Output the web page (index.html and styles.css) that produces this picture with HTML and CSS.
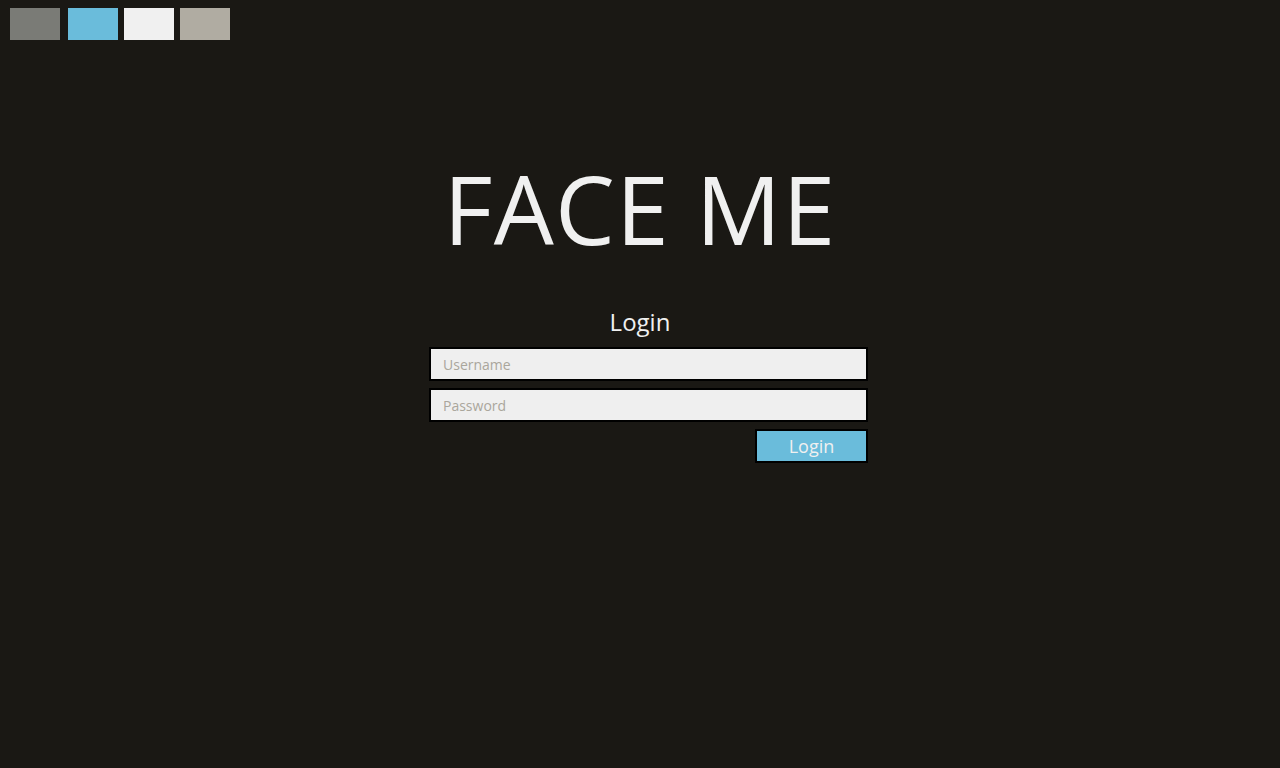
FILE: index.html
```html
<!DOCTYPE html>
<html>
<head>
<meta charset="utf-8">
<link rel="stylesheet" href="styles.css">
</head>
<body>
<div class="swatches">
  <span class="sw sw-gray"></span>
  <span class="sw sw-blue"></span>
  <span class="sw sw-white"></span>
  <span class="sw sw-taupe"></span>
</div>
<main class="main">
  <h1 class="title">FACE ME</h1>
  <h2 class="subtitle">Login</h2>
  <form class="form">
    <input class="field" type="text" placeholder="Username">
    <input class="field" type="password" placeholder="Password">
    <div class="actions"><button class="btn" type="button">Login</button></div>
  </form>
</main>
</body>
</html>
```
FILE: styles.css
```css
html, body {
  margin: 0;
  padding: 0;
  background: #1a1814;
  height: 100%;
}
body {
  font-family: "Open Sans", "Noto Sans", sans-serif;
  color: #f0f0f0;
}
.swatches {
  display: flex;
  padding: 8px 0 0 10px;
}
.sw {
  width: 50px;
  height: 32px;
  margin-right: 6px;
}
.sw-gray { background: #7a7b76; margin-right: 8px; }
.sw-blue { background: #6abcdb; }
.sw-white { background: #f0f0f0; }
.sw-taupe { background: #b0aca2; }
.main {
  display: flex;
  flex-direction: column;
  align-items: center;
}
.title {
  margin: 108px 0 0;
  font-size: 95px;
  font-weight: 400;
  line-height: 120px;
  letter-spacing: 1.2px;
  color: #f0f0f0;
}
.subtitle {
  margin: 38px 0 0;
  font-size: 24px;
  font-weight: 400;
  line-height: 32px;
}
.form {
  width: 439px;
  margin: 9px 0 0 17px;
  display: flex;
  flex-direction: column;
  gap: 7px;
}
.field {
  box-sizing: border-box;
  width: 100%;
  height: 34px;
  border: 2px solid #000;
  background: #efefef;
  padding: 0 12px;
  font-family: inherit;
  font-size: 14px;
  color: #333;
  outline: none;
  margin: 0;
}
.field::placeholder { color: #aaa69c; }
.actions {
  display: flex;
  justify-content: flex-end;
}
.btn {
  box-sizing: border-box;
  width: 113px;
  height: 34px;
  border: 2px solid #000;
  background: #6abcdb;
  color: #f0f0f0;
  font-family: inherit;
  font-size: 18px;
  padding: 0;
  line-height: 30px;
}
```
